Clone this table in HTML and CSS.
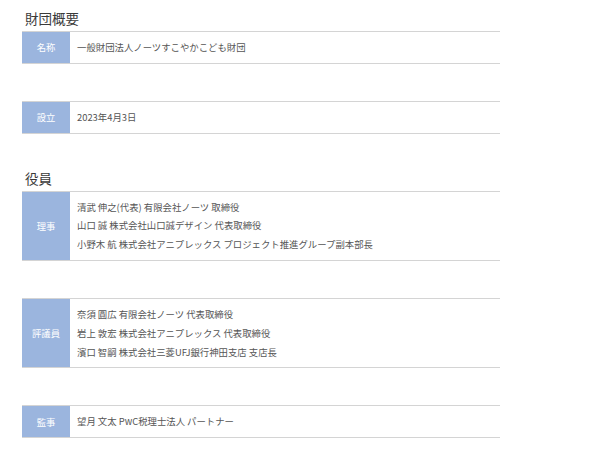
FILE: index.html
```html
<!DOCTYPE html>
<html lang="ja">
<head>
  <meta charset="UTF-8">
  <meta name="viewport" content="width=device-width, initial-scale=1.0">
  <title>財団概要</title>
  <link rel="stylesheet" href="styles.css">
</head>
<body>
  <div class="page">
    <h2 class="section-title">財団概要</h2>
    <div class="info-row">
      <div class="info-label">名称</div>
      <div class="info-body">一般財団法人ノーツすこやかこども財団</div>
    </div>
    <div class="info-row">
      <div class="info-label">設立</div>
      <div class="info-body">2023年4月3日</div>
    </div>

    <h2 class="section-title">役員</h2>
    <div class="info-row">
      <div class="info-label">理事</div>
      <div class="info-body">
        <p>清武 伸之(代表) 有限会社ノーツ 取締役</p>
        <p>山口 誠 株式会社山口誠デザイン 代表取締役</p>
        <p>小野木 航 株式会社アニプレックス プロジェクト推進グループ副本部長</p>
      </div>
    </div>
    <div class="info-row">
      <div class="info-label">評議員</div>
      <div class="info-body">
        <p>奈須 圓広 有限会社ノーツ 代表取締役</p>
        <p>岩上 敦宏 株式会社アニプレックス 代表取締役</p>
        <p>濱口 智嗣 株式会社三菱UFJ銀行神田支店 支店長</p>
      </div>
    </div>
    <div class="info-row">
      <div class="info-label">監事</div>
      <div class="info-body">望月 文太 PwC税理士法人 パートナー</div>
    </div>
  </div>
</body>
</html>
```

FILE: styles.css
```css
:root {
  --label-bg: #9bb5de;
  --line-color: #d4d4d4;
  --text-color: #555;
  --title-color: #3a3a3a;
}

body {
  margin: 0;
  background-color: #fff;
  font-family: "Noto Sans CJK JP", "Noto Sans", sans-serif;
  color: var(--text-color);
}

.page {
  width: 478px;
  padding: 11px 0 0 22px;
}

.section-title {
  margin: 0;
  padding: 0 0 6px 3px;
  font-size: 13.5px;
  font-weight: 400;
  line-height: 14px;
  color: var(--title-color);
}

.info-row {
  display: flex;
  border-top: 1px solid var(--line-color);
  border-bottom: 1px solid var(--line-color);
  margin-bottom: 37px;
}

.info-label {
  flex: 0 0 48px;
  display: flex;
  align-items: center;
  justify-content: center;
  background-color: var(--label-bg);
  color: #fff;
  font-size: 9.3px;
}

.info-body {
  flex: 1;
  padding: 6px 7px;
  font-size: 9.4px;
  line-height: 18.8px;
}

.info-body p {
  margin: 0;
}
```
